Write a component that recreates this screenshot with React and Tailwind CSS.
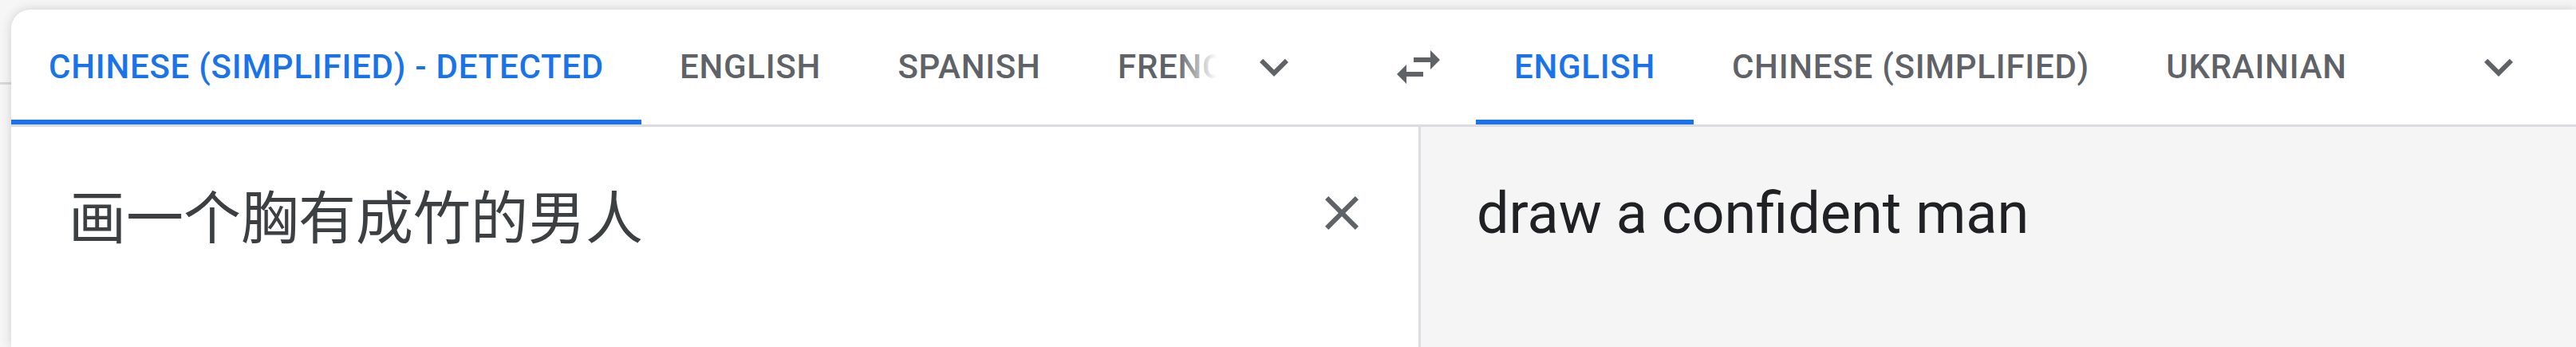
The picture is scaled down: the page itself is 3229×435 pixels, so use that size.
import React from 'react';

const SRC_TABS = [
  { label: 'CHINESE (SIMPLIFIED) - DETECTED', w: 'w-[790px]', active: true },
  { label: 'ENGLISH', w: 'w-[273px]' },
  { label: 'SPANISH', w: 'w-[276px]' },
  { label: 'FRENCH', w: 'px-[48px]' },
];

const TGT_TABS = [
  { label: 'ENGLISH', w: 'w-[273px]', active: true },
  { label: 'CHINESE (SIMPLIFIED)', w: 'w-[544px]' },
  { label: 'UKRAINIAN', w: 'w-[323px]' },
];

const ExpandMore = () => (
  <svg width="72" height="72" viewBox="0 0 24 24" fill="#5f6368">
    <path d="M16.59 8.59L12 13.17 7.41 8.59 6 10l6 6 6-6z" />
  </svg>
);

const SwapHoriz = () => (
  <svg width="72" height="72" viewBox="0 0 24 24" fill="#5f6368">
    <path d="M6.99 11L3 15l3.99 4v-3H14v-2H6.99v-3zM21 9l-4-4v3H10v2h7v3l4-4z" />
  </svg>
);

const CloseIcon = () => (
  <svg width="72" height="72" viewBox="0 0 24 24" fill="#5f6368">
    <path d="M19 6.41L17.59 5 12 10.59 6.41 5 5 6.41 10.59 12 5 17.59 6.41 19 12 13.41 17.59 19 19 17.59 13.41 12z" />
  </svg>
);

const Tab = ({ label, w, active }) => (
  <div
    className={`flex h-full shrink-0 flex-col pt-[6px] ${w} ${
      active ? 'text-[#1a73e8]' : 'text-[#5f6368]'
    }`}
  >
    <div className="flex flex-1 items-center justify-center whitespace-nowrap font-['Roboto',sans-serif] text-[42px] font-medium leading-none tracking-[0.75px]">
      {label}
    </div>
    <div className={`h-[6px] w-full ${active ? 'bg-[#1a73e8]' : 'bg-transparent'}`} />
  </div>
);

const App = () => {
  return (
    <div className="flex h-[435px] w-[3229px] overflow-hidden bg-[#f6f6f6]">
      {/* bit of the page behind the card */}
      <div className="w-[14px] shrink-0 pt-[103px]">
        <div className="h-[3px] bg-[#d9d9d9]" />
      </div>

      <div className="mt-[12px] flex flex-1 flex-col overflow-hidden rounded-tl-[24px] bg-white shadow-[0_0_14px_rgba(0,0,0,0.16)]">
        {/* language bar */}
        <div className="flex h-[147px] shrink-0 border-b-[3px] border-[#dadce0]">
          <div className="relative flex h-full w-[1511px] shrink-0 overflow-hidden">
            {SRC_TABS.map((t) => (
              <Tab key={t.label} {...t} />
            ))}
            <div className="absolute right-0 top-0 h-full w-[50px] bg-gradient-to-r from-white/0 to-white" />
          </div>
          <button className="ml-[36px] flex h-full w-[72px] shrink-0 items-center justify-center">
            <ExpandMore />
          </button>
          <button className="ml-[109px] flex h-full w-[72px] shrink-0 items-center justify-center">
            <SwapHoriz />
          </button>
          <div className="ml-[36px] flex h-full shrink-0">
            {TGT_TABS.map((t) => (
              <Tab key={t.label} {...t} />
            ))}
          </div>
          <button className="ml-[106px] flex h-full w-[72px] shrink-0 items-center justify-center">
            <ExpandMore />
          </button>
        </div>

        {/* text panes */}
        <div className="flex flex-1">
          <div className="flex w-[1767px] shrink-0 items-start border-r-[3px] border-[#dadce0]">
            <div className="flex-1 pl-[72px] pt-[61px] font-['Noto_Sans_CJK_SC',sans-serif] text-[72px] leading-[96px] text-[#3c4043]">
              画一个胸有成竹的男人
            </div>
            <button className="mr-[60px] mt-[72px] flex h-[72px] w-[72px] items-center justify-center">
              <CloseIcon />
            </button>
          </div>
          <div className="flex-1 bg-[#f5f5f5] pl-[70px] pt-[61px] font-['Roboto',sans-serif] text-[72px] leading-[96px] text-[#202124]">
            draw a confident man
          </div>
        </div>
      </div>
    </div>
  );
};

export default App;
